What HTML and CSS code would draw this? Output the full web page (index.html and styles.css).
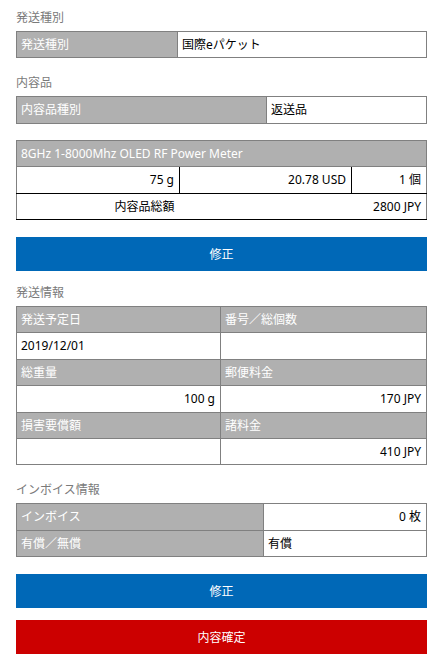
FILE: index.html
```html
<!DOCTYPE html>
<html lang="ja">
<head>
    <meta charset="UTF-8">
    <meta name="viewport" content="width=device-width, initial-scale=1.0">
    <title>内容確認</title>
    <link rel="stylesheet" href="styles.css">
</head>
<body>
<div class="page">

    <!-- 発送種別 -->
    <div class="section">
        <div class="title">発送種別</div>
        <table class="grid">
            <tr>
                <th class="w-ship">発送種別</th>
                <td>国際eパケット</td>
            </tr>
        </table>
    </div>

    <!-- 内容品 -->
    <div class="section">
        <div class="title">内容品</div>
        <table class="grid">
            <tr>
                <th class="w-kind">内容品種別</th>
                <td>返送品</td>
            </tr>
        </table>
    </div>

    <div class="section">
        <table class="grid item">
            <colgroup>
                <col class="w-weight">
                <col class="w-price">
                <col>
            </colgroup>
            <tr>
                <th colspan="3">8GHz 1-8000Mhz OLED RF Power Meter</th>
            </tr>
            <tr>
                <td class="num">75 g</td>
                <td class="num">20.78 USD</td>
                <td class="num">1 個</td>
            </tr>
            <tr class="total">
                <td class="num">内容品総額</td>
                <td class="num" colspan="2">2800 JPY</td>
            </tr>
        </table>
    </div>

    <button class="btn btn-blue">修正</button>

    <!-- 発送情報 -->
    <div class="section">
        <div class="title">発送情報</div>
        <table class="grid">
            <tr>
                <th class="w-half">発送予定日</th>
                <th>番号／総個数</th>
            </tr>
            <tr>
                <td>2019/12/01</td>
                <td></td>
            </tr>
            <tr>
                <th>総重量</th>
                <th>郵便料金</th>
            </tr>
            <tr>
                <td class="num">100 g</td>
                <td class="num">170 JPY</td>
            </tr>
            <tr>
                <th>損害要償額</th>
                <th>諸料金</th>
            </tr>
            <tr>
                <td></td>
                <td class="num">410 JPY</td>
            </tr>
        </table>
    </div>

    <!-- インボイス情報 -->
    <div class="section">
        <div class="title">インボイス情報</div>
        <table class="grid">
            <tr>
                <th class="w-invoice">インボイス</th>
                <td class="num">0 枚</td>
            </tr>
            <tr>
                <th>有償／無償</th>
                <td>有償</td>
            </tr>
        </table>
    </div>

    <button class="btn btn-blue">修正</button>
    <button class="btn btn-red">内容確定</button>

</div>
</body>
</html>
```

FILE: styles.css
```css
body {
    font-family: "Noto Sans", "Noto Sans CJK JP", sans-serif;
    font-size: 12px;
    margin: 0;
    padding: 0;
    color: #000;
    background: #fff;
}
.page {
    padding: 9px 17px 0 16px;
}
.section {
    margin-bottom: 16px;
}
.title {
    color: #7a7a7a;
    line-height: 18px;
    margin-bottom: 4px;
}

.grid {
    width: 100%;
    border-collapse: collapse;
    table-layout: fixed;
}
.grid th,
.grid td {
    border: 1px solid #808080;
    padding: 5px 5px 5px 4px;
    line-height: 15.4px;
    height: 15.4px;
    text-align: left;
    font-weight: normal;
    white-space: nowrap;
    overflow: hidden;
}
.grid th {
    background: #b0b0b0;
    color: #fff;
}
.grid td {
    background: #fff;
}
.grid .num {
    text-align: right;
}

.w-ship { width: 151px; }
.w-kind { width: 240px; }
.w-half { width: 194px; }
.w-invoice { width: 237px; }

.item td {
    border-color: #000;
}
.item tr td:first-child {
    border-left-color: #808080;
}
.item tr td:last-child {
    border-right-color: #808080;
}
.item .total td:first-child {
    border-right: none;
}
.item .total td:last-child {
    border-left: none;
}
.w-weight { width: 163px; }
.w-price { width: 172px; }

.btn {
    display: block;
    width: 100%;
    height: 34px;
    border: none;
    color: #fff;
    font-family: inherit;
    font-size: 12px;
    cursor: pointer;
    margin: 17px 0 13px;
}
.btn-blue {
    background: #0068b7;
}
.btn-red {
    background: #cc0000;
    margin-top: -1px;
}
```
